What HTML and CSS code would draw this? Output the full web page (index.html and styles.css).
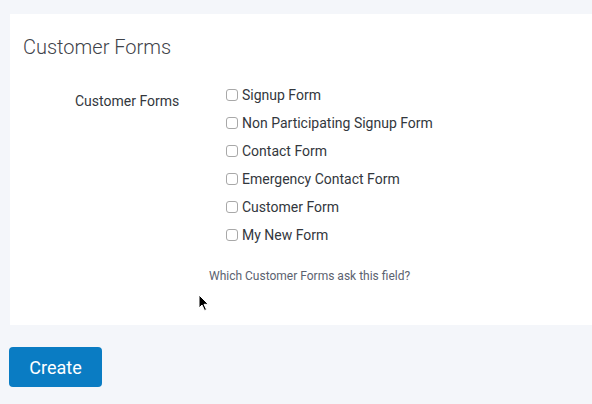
FILE: index.html
```html
<!DOCTYPE html>
<html>
<head>
<meta charset="utf-8">
<link rel="stylesheet" href="styles.css">
</head>
<body>
<div class="page">
  <section class="card">
    <h2 class="card-title">Customer Forms</h2>
    <div class="field-row">
      <div class="field-label">Customer Forms</div>
      <div class="field-control">
        <ul class="check-list">
          <li class="check-item"><span class="box"></span>Signup Form</li>
          <li class="check-item"><span class="box"></span>Non Participating Signup Form</li>
          <li class="check-item"><span class="box"></span>Contact Form</li>
          <li class="check-item"><span class="box"></span>Emergency Contact Form</li>
          <li class="check-item"><span class="box"></span>Customer Form</li>
          <li class="check-item"><span class="box"></span>My New Form</li>
        </ul>
        <p class="help">Which Customer Forms ask this field?</p>
      </div>
    </div>
  </section>
  <button class="btn-create">Create</button>
</div>
<svg class="cursor" width="12" height="18" viewBox="0 0 12 18">
  <path d="M1 1 L1 14 L4 11 L6.5 16.5 L8.5 15.6 L6 10.3 L10.3 10.3 Z" fill="#000" stroke="#fff" stroke-width="1"/>
</svg>
</body>
</html>
```

FILE: styles.css
```css
html, body {
  margin: 0;
  padding: 0;
  background: #f4f6fa;
  font-family: Roboto, "Liberation Sans", Arial, sans-serif;
  color: #3a3e45;
}
.page {
  padding: 14px 0 0 10px;
  display: flex;
  flex-direction: column;
  align-items: flex-start;
}
.card {
  background: #fff;
  align-self: stretch;
  box-sizing: border-box;
  height: 311px;
  padding: 21px 0 0 13px;
}
.card-title {
  margin: 0;
  font-size: 20px;
  line-height: 24px;
  font-weight: 300;
  color: #3f434a;
}
.field-row {
  display: flex;
  margin-top: 26px;
}
.field-label {
  width: 134px;
  padding-left: 52px;
  margin-top: 6px;
  font-size: 14px;
  line-height: 20px;
  color: #33373d;
}
.check-list {
  list-style: none;
  margin: 0;
  padding: 0 0 0 17px;
  display: flex;
  flex-direction: column;
  gap: 8px;
}
.check-item {
  display: flex;
  align-items: center;
  gap: 4px;
  font-size: 14px;
  line-height: 20px;
  color: #33373d;
}
.box {
  width: 12px;
  height: 12px;
  box-sizing: border-box;
  border: 1px solid #a8a8a8;
  border-radius: 3px;
  background: #fff;
}
.help {
  margin: 23px 0 0 0;
  font-size: 12px;
  line-height: 16px;
  color: #5b6270;
}
.btn-create {
  margin-top: 22px;
  margin-left: -1px;
  width: 93px;
  height: 40px;
  border: none;
  border-radius: 4px;
  background: #0a7cc3;
  color: #fff;
  font-family: Roboto, "Liberation Sans", Arial, sans-serif;
  font-size: 18px;
  padding: 0;
}
.cursor {
  position: absolute;
  left: 198px;
  top: 294px;
}
```
